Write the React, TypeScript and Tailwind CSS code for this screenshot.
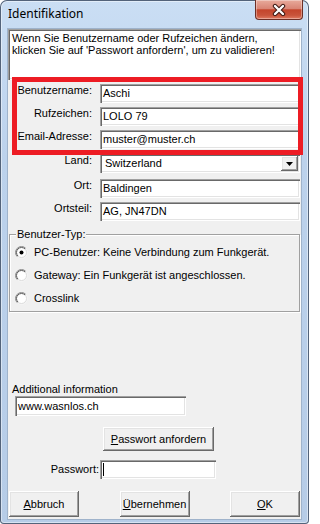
import React from "react";

const sunken =
  "bg-white shadow-[inset_1px_1px_#a0a0a0,inset_2px_2px_#696969,inset_-1px_-1px_#ffffff,inset_-2px_-2px_#e3e3e3]";
const raised =
  "bg-[#f0f0f0] shadow-[inset_-1px_-1px_#696969,inset_1px_1px_#ffffff,inset_-2px_-2px_#a0a0a0,inset_2px_2px_#e3e3e3]";

function Radio({ checked, id }: { checked?: boolean; id: string }) {
  return (
    <svg width="13" height="13" viewBox="0 0 13 13" className="shrink-0">
      <defs>
        <linearGradient id={`o-${id}`} x1="0" y1="0" x2="1" y2="1">
          <stop offset="0.45" stopColor="#8a8a8a" />
          <stop offset="0.55" stopColor="#f4f4f4" />
        </linearGradient>
        <linearGradient id={`i-${id}`} x1="0" y1="0" x2="1" y2="1">
          <stop offset="0.45" stopColor="#5a5a5a" />
          <stop offset="0.55" stopColor="#dcdcdc" />
        </linearGradient>
      </defs>
      <circle cx="6.5" cy="6.5" r="6" fill="none" stroke={`url(#o-${id})`} strokeWidth="1" />
      <circle cx="6.5" cy="6.5" r="5" fill="#ffffff" stroke={`url(#i-${id})`} strokeWidth="1" />
      {checked && <circle cx="6.5" cy="6.5" r="2" fill="#000000" />}
    </svg>
  );
}

function FieldRow({
  label,
  value,
  className,
}: {
  label: string;
  value: string;
  className: string;
}) {
  return (
    <div className={`flex items-start ${className}`}>
      <span className="w-[84px] text-right leading-[13px]">{label}</span>
      <div className={`ml-[8px] flex h-[19px] w-[200px] items-center px-[3px] ${sunken}`}>
        {value}
      </div>
    </div>
  );
}

export default function App() {
  return (
    <div className="relative h-[524px] w-[309px] overflow-hidden rounded-t-[7px] rounded-b-[4px] bg-[linear-gradient(to_bottom,#cadef4,#bcd2ec_30%,#b6cce7)] shadow-[inset_0_0_0_1px_#53637a,inset_0_0_0_2px_rgba(255,255,255,0.45)]">
      {/* title bar */}
      <div className="flex h-[28px] items-start justify-between pl-[8px] pr-[6px]">
        <span className="mt-[5px] font-['Noto_Sans',sans-serif] text-[12px] leading-[18px] text-black">
          Identifikation
        </span>
        <button
          type="button"
          className="flex h-[20px] w-[48px] items-center justify-center rounded-b-[4px] border border-t-0 border-[#6d2f26] bg-[linear-gradient(to_bottom,#e8aa9c,#d98575_45%,#c4452c_52%,#c8533a_80%,#e07b62)] shadow-[inset_0_0_0_1px_rgba(255,255,255,0.35)]"
        >
          <svg width="16" height="14" viewBox="0 0 16 14">
            <path d="M4 3 L12 11 M12 3 L4 11" stroke="#3d1812" strokeWidth="4.4" strokeLinecap="round" />
            <path d="M4 3 L12 11 M12 3 L4 11" stroke="#ffffff" strokeWidth="2.4" strokeLinecap="round" />
          </svg>
        </button>
      </div>

      {/* client area */}
      <div className="ml-[7px] w-[295px] border border-[#9fb3cb] bg-[#f0f0f0]">
        <div className="flex h-[490px] flex-col font-['Liberation_Sans',Arial,sans-serif] text-[11px] text-black">
          <div className={`h-[51px] w-full px-[4px] pt-[3px] leading-[12px] ${sunken}`}>
            Wenn Sie Benutzername oder Rufzeichen ändern,
            <br />
            klicken Sie auf 'Passwort anfordern', um zu validieren!
          </div>

          <FieldRow label="Benutzername:" value="Aschi" className="mt-[4px]" />
          <FieldRow label="Rufzeichen:" value="LOLO 79" className="mt-[4px]" />
          <FieldRow label="Email-Adresse:" value="muster@muster.ch" className="mt-[4px]" />

          <div className="mt-[5px] flex items-start">
            <span className="w-[84px] text-right leading-[13px]">Land:</span>
            <div className={`ml-[8px] flex h-[19px] w-[200px] items-center justify-between pl-[5px] pr-[2px] ${sunken}`}>
              <span>Switzerland</span>
              <div className={`flex h-[15px] w-[17px] items-center justify-center ${raised}`}>
                <svg width="7" height="4" viewBox="0 0 7 4">
                  <path d="M0 0 H7 L3.5 4 Z" fill="#000000" />
                </svg>
              </div>
            </div>
          </div>

          <FieldRow label="Ort:" value="Baldingen" className="mt-[6px]" />
          <FieldRow label="Ortsteil:" value="AG, JN47DN" className="mt-[4px]" />

          {/* group box */}
          <div className="relative ml-[1px] mt-[13px] h-[78px] w-[291px] border border-[#a0a0a0] shadow-[inset_1px_1px_#ffffff,1px_1px_#ffffff]">
            <span className="absolute -top-[7px] left-[6px] bg-[#f0f0f0] px-[1px] leading-[13px]">
              Benutzer-Typ:
            </span>
            <div className="flex flex-col pl-[5px] pt-[6px]">
              <label className="flex h-[23px] items-center gap-[6px]">
                <Radio checked id="r1" />
                PC-Benutzer: Keine Verbindung zum Funkgerät.
              </label>
              <label className="flex h-[23px] items-center gap-[6px]">
                <Radio id="r2" />
                Gateway: Ein Funkgerät ist angeschlossen.
              </label>
              <label className="flex h-[23px] items-center gap-[6px]">
                <Radio id="r3" />
                Crosslink
              </label>
            </div>
          </div>

          <span className="ml-[4px] mt-[71px] leading-[13px]">Additional information</span>
          <div className={`ml-[7px] flex h-[20px] w-[171px] items-center px-[3px] ${sunken}`}>
            www.wasnlos.ch
          </div>

          <button
            type="button"
            className={`ml-[95px] mt-[11px] h-[24px] w-[111px] ${raised}`}
          >
            <span className="underline underline-offset-[1px]">P</span>asswort anfordern
          </button>

          <div className="mt-[9px] flex items-center">
            <span className="w-[91px] text-right leading-[13px]">Passwort:</span>
            <div className={`ml-[1px] flex h-[19px] w-[116px] items-center pl-[3px] ${sunken}`}>
              <span className="h-[13px] w-[1px] bg-black" />
            </div>
          </div>

          <div className="mt-[12px] flex justify-between px-[1px]">
            <button type="button" className={`h-[26px] w-[70px] ${raised}`}>
              <span className="underline underline-offset-[1px]">A</span>bbruch
            </button>
            <button type="button" className={`h-[26px] w-[70px] ${raised}`}>
              <span className="underline underline-offset-[1px]">Ü</span>bernehmen
            </button>
            <button type="button" className={`h-[26px] w-[70px] ${raised}`}>
              <span className="underline underline-offset-[1px]">O</span>K
            </button>
          </div>
        </div>
      </div>

      {/* red highlight frame drawn over the account fields */}
      <div className="pointer-events-none absolute left-[12px] top-[77px] h-[78px] w-[291px] border-[5px] border-[#ed1c24]" />
    </div>
  );
}
